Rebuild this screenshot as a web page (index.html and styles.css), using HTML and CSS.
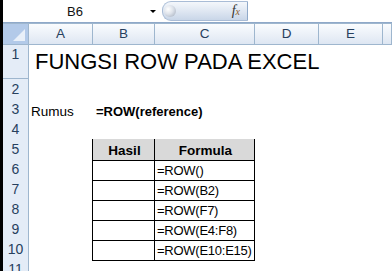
FILE: index.html
```html
<!DOCTYPE html>
<html lang="id">
<head>
<meta charset="UTF-8">
<meta name="viewport" content="width=device-width, initial-scale=1.0">
<link rel="stylesheet" href="styles.css">
<title>Fungsi ROW</title>
</head>
<body>
<div class="window">
  <div class="edge"></div>
  <div class="main">

    <!-- name box + formula bar -->
    <div class="fbar">
      <div class="namebox">B6</div>
      <div class="arrow"></div>
      <div class="fxbox">
        <span class="grip"></span>
        <span class="fx"><i>f</i><i class="x">x</i></span>
      </div>
      <div class="input"></div>
    </div>
    <div class="gap"></div>

    <div class="sheet">
      <div class="row head">
        <div class="corner"></div>
        <div class="col">A</div>
        <div class="col">B</div>
        <div class="col">C</div>
        <div class="col">D</div>
        <div class="col">E</div>
        <div class="col"></div>
      </div>

      <div class="row r1">
        <div class="num">1</div>
        <div class="cell title">FUNGSI ROW PADA EXCEL</div>
      </div>
      <div class="row">
        <div class="num">2</div>
      </div>
      <div class="row">
        <div class="num">3</div>
        <div class="cell">Rumus</div>
        <div class="cell bold">=ROW(reference)</div>
      </div>
      <div class="row">
        <div class="num">4</div>
        <div class="cell"></div>
        <div class="cell cap"></div>
        <div class="cell cap"></div>
      </div>
      <div class="row">
        <div class="num">5</div>
        <div class="cell side"></div>
        <div class="cell tb th">Hasil</div>
        <div class="cell tb th">Formula</div>
      </div>
      <div class="row">
        <div class="num">6</div>
        <div class="cell side"></div>
        <div class="cell tb"></div>
        <div class="cell tb">=ROW()</div>
      </div>
      <div class="row">
        <div class="num">7</div>
        <div class="cell side"></div>
        <div class="cell tb"></div>
        <div class="cell tb">=ROW(B2)</div>
      </div>
      <div class="row">
        <div class="num">8</div>
        <div class="cell side"></div>
        <div class="cell tb"></div>
        <div class="cell tb">=ROW(F7)</div>
      </div>
      <div class="row">
        <div class="num">9</div>
        <div class="cell side"></div>
        <div class="cell tb"></div>
        <div class="cell tb">=ROW(E4:F8)</div>
      </div>
      <div class="row">
        <div class="num">10</div>
        <div class="cell side"></div>
        <div class="cell tb"></div>
        <div class="cell tb">=ROW(E10:E15)</div>
      </div>
      <div class="row">
        <div class="num">11</div>
      </div>
    </div>

  </div>
</div>
</body>
</html>
```

FILE: styles.css
```css
body {
  margin: 0;
  background: #fff;
  font-family: "Liberation Sans", Arial, sans-serif;
  color: #000;
}

.window {
  display: flex;
  width: 392px;
  height: 271px;
  overflow: hidden;
}

.edge {
  width: 3px;
  background: #000;
}

.main {
  flex: 1;
  display: flex;
  flex-direction: column;
  min-width: 0;
}

/* formula bar */
.fbar {
  display: flex;
  align-items: center;
  height: 22px;
  border-bottom: 1px solid #8fa9c9;
  background: #fff;
}

.namebox {
  width: 144px;
  text-align: center;
  font-size: 13px;
  color: #111;
}

.arrow {
  width: 0;
  height: 0;
  margin-left: 3px;
  border-left: 3px solid transparent;
  border-right: 3px solid transparent;
  border-top: 3px solid #000;
}

.fxbox {
  width: 84px;
  height: 18px;
  margin-left: 6px;
  display: flex;
  align-items: center;
  justify-content: space-between;
  border: 1px solid #a9bcd6;
  border-right: 1px solid #8fa9c9;
  border-radius: 9px 0 0 9px;
  background: linear-gradient(#f4f7fb, #dfe7f2 50%, #c9d6e8);
}

.grip {
  width: 12px;
  height: 12px;
  margin-left: 1px;
  border-radius: 50%;
  background: radial-gradient(circle at 35% 35%, #fff, #dde2ea 45%, #9ea8b8);
}

.fx {
  margin-right: 7px;
  font-family: "Liberation Serif", serif;
  font-size: 14px;
  color: #333;
}

.fx .x {
  font-size: 10px;
  color: #8a5a2a;
}

.input {
  flex: 1;
  height: 22px;
}

.gap {
  height: 2px;
  background: #e6edf6;
}

/* grid */
.row {
  display: grid;
  grid-template-columns: 26px 64px 62px 100px 64px 64px 1fr;
  height: 20px;
  box-sizing: border-box;
}

.row.r1 {
  height: 35px;
}

.row.head {
  height: 21px;
  border-top: 1px solid #9eb6ce;
}

.corner {
  background: #b3cae9;
  border-right: 1px solid #9eb6ce;
  border-bottom: 1px solid #9eb6ce;
  position: relative;
}

.corner::after {
  content: "";
  position: absolute;
  right: 3px;
  bottom: 3px;
  border-left: 12px solid transparent;
  border-bottom: 12px solid #e9f0f9;
}

.col {
  background: linear-gradient(#fafcfe, #e9eff7 60%, #dde6f2);
  border-right: 1px solid #9eb6ce;
  border-bottom: 1px solid #9eb6ce;
  text-align: center;
  font-size: 13.5px;
  line-height: 20px;
  color: #27405e;
}

.num {
  background: #e4ecf7;
  border-right: 1px solid #9eb6ce;
  border-bottom: 1px solid #9eb6ce;
  text-align: center;
  font-size: 14px;
  line-height: 21px;
  color: #27405e;
}

.cell {
  display: flex;
  align-items: flex-end;
  padding: 0 0 1px 2px;
  box-sizing: border-box;
  font-size: 13.5px;
  line-height: 16px;
  white-space: nowrap;
  overflow: visible;
}

.cell.title {
  font-size: 22px;
  line-height: 26px;
  padding-left: 6px;
  padding-bottom: 4px;
}

.cell.bold {
  font-weight: bold;
  font-size: 13px;
  padding-left: 3px;
}

.cell.cap {
  border-bottom: 1px solid #000;
}

.cell.side {
  border-right: 1px solid #000;
}

.cell.tb {
  border-right: 1px solid #000;
  border-bottom: 1px solid #000;
  font-size: 13px;
  letter-spacing: -0.25px;
}

.cell.th {
  justify-content: center;
  background: #d9d9d9;
  font-size: 13.5px;
  letter-spacing: 0;
  font-weight: bold;
}
```
